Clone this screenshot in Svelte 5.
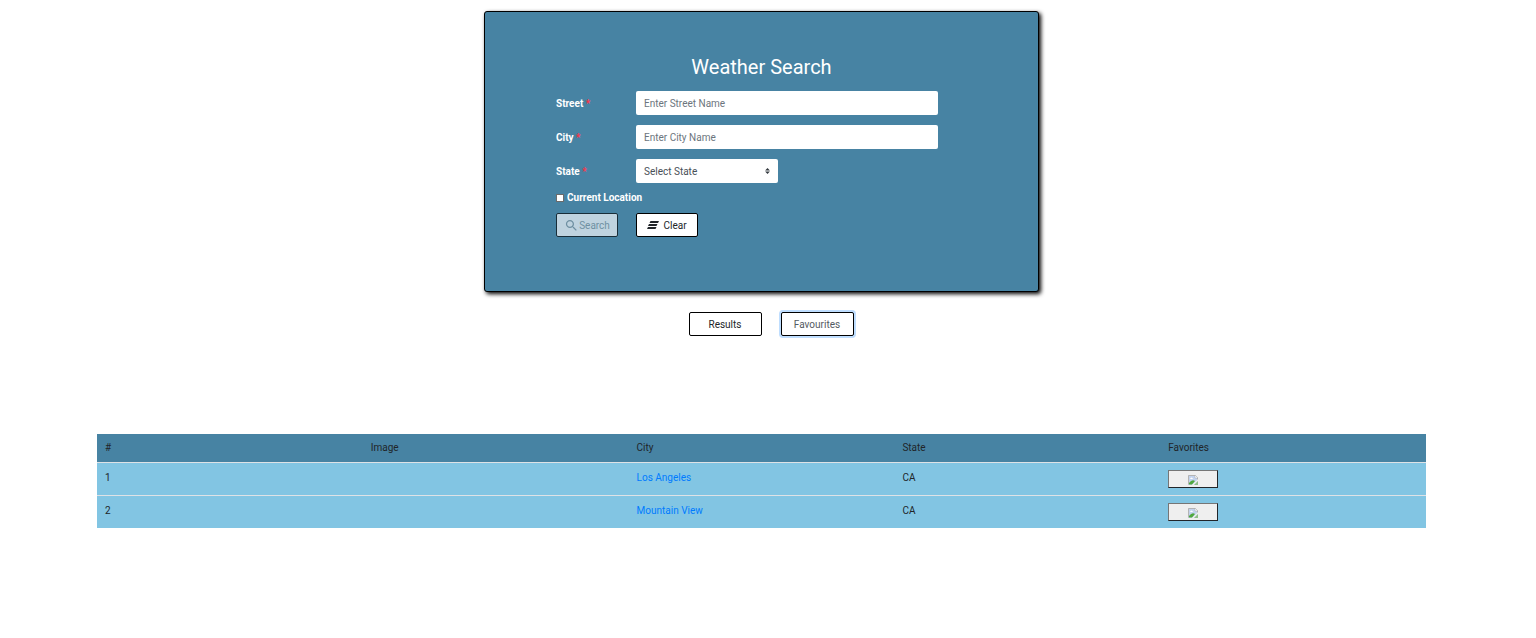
<script>
  let street = $state('');
  let city = $state('');
  let region = $state('');
  let useCurrent = $state(false);

  const favourites = [
    { city: 'Los Angeles', state: 'CA' },
    { city: 'Mountain View', state: 'CA' }
  ];

  function clear() {
    street = '';
    city = '';
    region = '';
    useCurrent = false;
  }
</script>

<main>
  <form class="card" onsubmit={(e) => e.preventDefault()}>
    <h1>Weather Search</h1>
    <div class="fields">
      <label for="street">Street <span class="required">*</span></label>
      <input id="street" type="text" placeholder="Enter Street Name" bind:value={street} />
      <label for="city">City <span class="required">*</span></label>
      <input id="city" type="text" placeholder="Enter City Name" bind:value={city} />
      <label for="state">State <span class="required">*</span></label>
      <select id="state" bind:value={region}>
        <option value="">Select State</option>
        <option value="CA">California</option>
      </select>
    </div>
    <label class="current">
      <input type="checkbox" bind:checked={useCurrent} />
      Current Location
    </label>
    <div class="actions">
      <button class="btn search" type="submit" disabled>
        <svg viewBox="0 0 24 24" width="15" height="15" aria-hidden="true">
          <path d="M15.5 14h-.79l-.28-.27C15.41 12.59 16 11.11 16 9.5 16 5.91 13.09 3 9.5 3S3 5.91 3 9.5 5.91 16 9.5 16c1.61 0 3.09-.59 4.23-1.57l.27.28v.79l5 4.99L20.49 19l-4.99-5zm-6 0C7.01 14 5 11.99 5 9.5S7.01 5 9.5 5 14 7.01 14 9.5 11.99 14 9.5 14z" />
        </svg>Search
      </button>
      <button class="btn clear" type="button" onclick={clear}>
        <svg viewBox="0 0 12 8" width="12" height="8" aria-hidden="true">
          <path d="M3.5 0H12l-1 2H2.500zM2 3h8.500l-1 2H1zM1 6h8.500l-1 2H0z" />
        </svg>Clear
      </button>
    </div>
  </form>

  <nav>
    <button class="btn" type="button">Results</button>
    <button class="btn active" type="button">Favourites</button>
  </nav>

  <table>
    <thead>
      <tr><th>#</th><th>Image</th><th>City</th><th>State</th><th>Favorites</th></tr>
    </thead>
    <tbody>
      {#each favourites as place, i}
        <tr>
          <td>{i + 1}</td>
          <td></td>
          <td><a href="#{place.city}">{place.city}</a></td>
          <td>{place.state}</td>
          <td>
            <button class="remove" type="button" aria-label="Remove {place.city}">
              <svg viewBox="0 0 10 10" width="10" height="10" aria-hidden="true">
                <path d="M0 0h7l3 3v7H0z" fill="#c3d3ee" />
                <path d="M.5 9.5v-9H7l2.5 2.5v2" fill="none" stroke="#b4b4b4" />
                <path d="M7 0v3h3z" fill="#fff" stroke="#a9a9a9" stroke-width=".5" />
                <path d="M2 4q.5-1.500 1.500-1.500T5 4z" fill="#fff" />
                <path d="M1 9.500V8q3-4 6-2L4 9.500z" fill="#4fa83d" />
                <path d="M4 10l6-6v2l-4 4z" fill="#eee" />
                <path d="M6 10l4-4v4z" fill="#8fbf88" />
              </svg>
            </button>
          </td>
        </tr>
      {/each}
    </tbody>
  </table>
</main>

<style>
  :global(body) {
    margin: 0;
    background: #fff;
  }

  main {
    display: flex;
    flex-direction: column;
    align-items: center;
    padding: 11px 110px 110px 97px;
    font: 10px/15px Roboto, sans-serif;
    color: #212529;
  }

  .card {
    box-sizing: border-box;
    width: 100%;
    max-width: 555px;
    padding: 43px 100px 54px 71px;
    border: 1px solid #000;
    border-radius: 3px;
    background: #4783a3;
    box-shadow: 2px 2px 4px #000;
    color: #fff;
  }

  h1 {
    margin: 0 -29px 12px 0;
    font-size: 20px;
    font-weight: 400;
    line-height: 24px;
    text-align: center;
  }

  .fields {
    display: grid;
    grid-template-columns: 71px 1fr;
    gap: 10px 9px;
    align-items: center;
  }

  label {
    font-weight: 700;
  }

  .required {
    color: #ff3347;
  }

  .fields input,
  select {
    box-sizing: border-box;
    width: 100%;
    height: 24px;
    padding: 0 8px;
    border: 0;
    border-radius: 2px;
    background: #fff;
    color: #495057;
    font: inherit;
  }

  .fields input::placeholder {
    color: #6c757d;
    opacity: 1;
  }

  select {
    width: 47%;
    appearance: none;
    background: #fff url("data:image/svg+xml,%3csvg xmlns='http://www.w3.org/2000/svg' viewBox='0 0 4 5'%3e%3cpath fill='%23343a40' d='M2 0L0 2h4zm0 5L0 3h4z'/%3e%3c/svg%3e") no-repeat right 8px center / 5px 6px;
  }

  .current {
    display: flex;
    align-items: center;
    gap: 3px;
    margin-top: 7px;
  }

  .current input {
    box-sizing: border-box;
    width: 8px;
    height: 8px;
    margin: 0;
    appearance: none;
    border: 1px solid #6b6b6b;
    background: #fff;
  }

  .current input:checked {
    background: #0075ff;
  }

  .actions {
    display: flex;
    gap: 18px;
    margin-top: 8px;
  }

  .btn {
    display: inline-flex;
    box-sizing: border-box;
    align-items: center;
    justify-content: center;
    height: 24px;
    min-width: 62px;
    padding: 0 6px;
    border: 1px solid #000;
    border-radius: 2px;
    background: #fff;
    color: #212529;
    font: inherit;
  }

  .btn svg {
    fill: currentColor;
  }

  .search {
    color: #8597a2;
    opacity: 0.65;
  }

  .clear svg {
    margin-right: 4px;
  }

  nav {
    display: flex;
    gap: 19px;
    margin: 20px 0 98px 19px;
  }

  nav .btn {
    min-width: 73px;
  }

  .active {
    box-shadow: 0 0 0 2px #bfdeff;
    color: #545b62;
  }

  table {
    width: 100%;
    border-collapse: collapse;
    table-layout: fixed;
    background: #82c5e3;
  }

  th,
  td {
    padding: 7px 8px;
    font-weight: 400;
    text-align: left;
    vertical-align: top;
  }

  th {
    padding: 6px 8px 7px;
    background: #4783a3;
  }

  td {
    border-top: 1px solid #dee2e6;
  }

  a {
    color: #007bff;
    text-decoration: none;
  }

  .remove {
    display: flex;
    box-sizing: border-box;
    align-items: end;
    justify-content: center;
    width: 50px;
    height: 18px;
    padding: 0 0 2px;
    border: 1px solid;
    border-color: #767676 #212529 #212529 #767676;
    background: #efefef;
  }
</style>
